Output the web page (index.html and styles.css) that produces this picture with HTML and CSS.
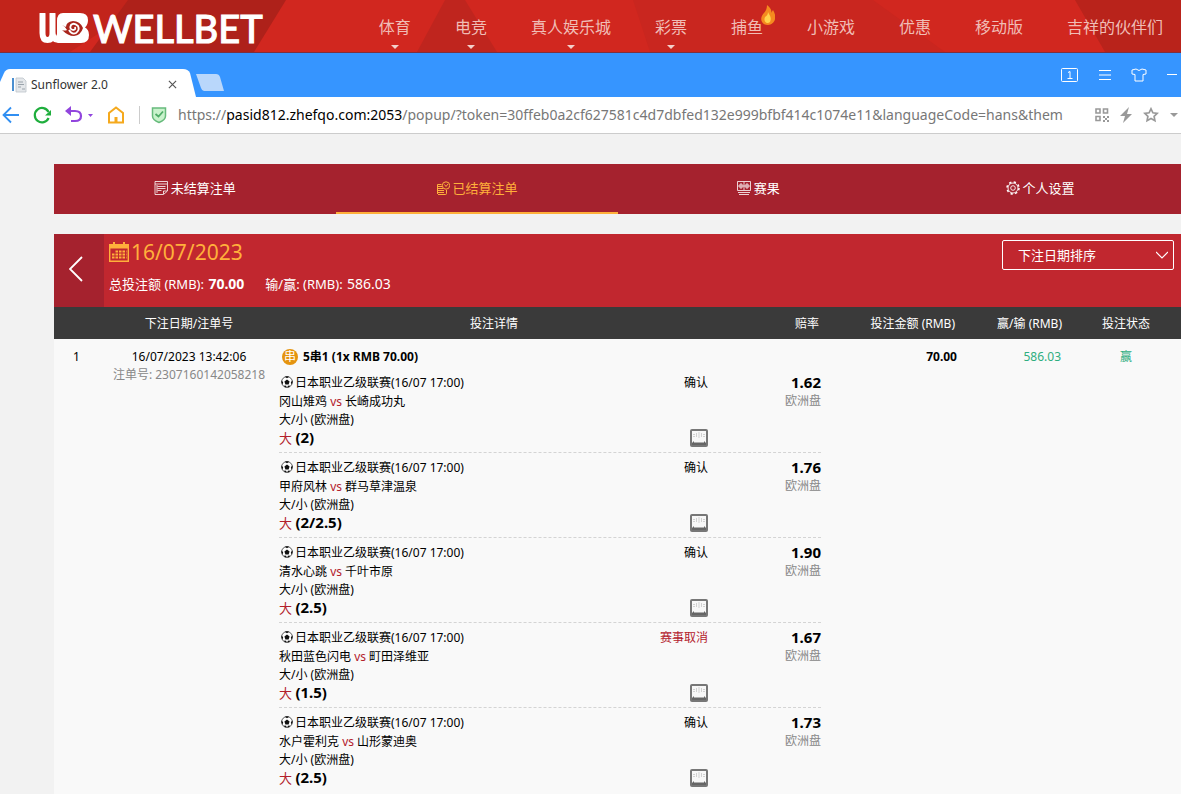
FILE: index.html
```html
<!DOCTYPE html>
<html lang="zh-Hans">
<head>
    <meta charset="UTF-8">
    <meta name="viewport" content="width=device-width, initial-scale=1.0">
    <title>Sunflower 2.0</title>
    <link rel="stylesheet" href="styles.css">
</head>
<body>
    <svg class="sprite" aria-hidden="true">
        <symbol id="ball" viewBox="0 0 12 12">
            <circle cx="6" cy="6" r="5.4" fill="#fff" stroke="#333" stroke-width=".8"/>
            <path d="M6 3.500l2.600 1.900-1 3H4.400l-1-3zM3.800.8L6 2.300 8.200.8 6 .3zM.6 4.500l1.600 1.800-.8 2.400L.4 6zM11.400 4.500L9.800 6.300l.8 2.400 1-2.700zM3.200 9.600l2 .2.3 1.800-2-.6zM8.800 9.600l-2 .2-.3 1.800 2-.6z" fill="#111"/>
        </symbol>
        <symbol id="score" viewBox="0 0 18 18">
            <rect width="18" height="18" rx="2" fill="#777"/>
            <path d="M2 2h14v12H2z" fill="#f7f7f7"/>
            <path d="M2 16v-2l2-2v1.500h10V12l2 2v2z" fill="#666"/>
            <path d="M4 5v4M6.500 4.500v4M11.500 4.500v4M14 5v4M9 3.500v6" fill="none" stroke="#aaa" stroke-dasharray="1 1"/>
        </symbol>
    </svg>

    <header class="site-header">
        <svg class="header-bg" viewBox="0 0 1181 52" preserveAspectRatio="none" aria-hidden="true">
            <path d="M0 0h150L70 52H0z" fill="#c2241b"/>
            <path d="M128 0h158l-32 52H90z" fill="#ae211a"/>
            <path d="M445 0h20l32 52h-80z" fill="#bf251e"/>
            <path d="M633 0h240l72 52H650z" fill="#c9261f"/>
            <path d="M1075 0h106v52h-76z" fill="#b9231b"/>
        </svg>
        <a class="logo" href="#">
            <svg class="logo-mark" viewBox="0 0 50 30" aria-hidden="true">
                <path d="M3.500 1v19q0 7 5 7t5-7V1M13.500 19q0 8 6 8h2" fill="none" stroke="#fff" stroke-width="6" stroke-linecap="round"/>
                <path d="M24 0h17q8 0 8 7 0 5-3 7.500 4 2 4 7.500 0 8-8 8H19q-4-4-1-9V8q0-8 6-8z" fill="#fff"/>
                <path d="M23 12q3 1 5 5-2 1-5 0 6 6 12 6 7-1 9-8-3-7-10-7-7 1-7 6" fill="#a9251c"/>
                <path d="M30 17q3 5 7 3 4-3 2-7-4-4-7-1-2 4 2 5 3 0 2-3" fill="none" stroke="#fff" stroke-width="1.800"/>
            </svg>
            <span>WELLBET</span>
        </a>
        <nav class="site-nav">
            <a class="has-menu" href="#">体育</a>
            <a class="has-menu" href="#">电竞</a>
            <a class="has-menu" href="#">真人娱乐城</a>
            <a class="has-menu" href="#">彩票</a>
            <a href="#">捕鱼<svg class="flame" viewBox="0 0 14 20" aria-hidden="true"><path d="M6 0c4 3 5 6 4 8l2-3c5 8 1 15-5 15-7 0-9-7-4-12 2-2 3-5 3-8z" fill="#f58a1f"/><path d="M7 7c2 4 4 6 2 10-3 3-7-1-5-5 2-1 3-3 3-5z" fill="#ffd34d"/></svg></a>
            <a href="#">小游戏</a>
            <a href="#">优惠</a>
            <a href="#">移动版</a>
            <a href="#">吉祥的伙伴们</a>
        </nav>
    </header>

    <div class="tab-strip">
        <div class="browser-tab">
            <svg class="tab-shape" viewBox="0 0 205 28" preserveAspectRatio="none" aria-hidden="true"><path d="M0 28V13L4 4q2-4 6-4h173q5 0 7 4l6 24z" fill="#fff"/></svg>
            <svg class="favicon" viewBox="0 0 16 16" aria-hidden="true"><path d="M1 1h2v13H1z" fill="#4b8fd0"/><path d="M5 1h7l3 3v11H5z" fill="#e4e7ea" stroke="#bcc4ca" stroke-width=".8"/><path d="M7 5h5M7 7.500h6M7 10h3M11 12h3" stroke="#9aa3ab"/></svg>
            <span>Sunflower 2.0</span>
            <button class="tab-close" aria-label="关闭"><svg viewBox="0 0 10 10" width="9" height="9"><path d="M1 1l8 8M9 1L1 9" stroke="#555" stroke-width="1.300"/></svg></button>
        </div>
        <button class="new-tab" aria-label="新标签页"><svg viewBox="0 0 28 18" width="28" height="18"><path d="M0 0h20q3 0 4 3l4 14H8q-2 0-3-3z" fill="#b9d7fb"/></svg></button>
        <div class="window-tools">
            <button aria-label="1"><svg viewBox="0 0 18 16" width="18" height="16" fill="none" stroke="#fff"><rect x=".5" y="1.500" width="16" height="13" rx="1"/><path d="M7 5.500l2-1v7M6.500 11.500h5"/></svg></button>
            <button aria-label="菜单"><svg viewBox="0 0 14 12" width="14" height="12" stroke="#fff"><path d="M1 1.500h12M1 6h12M1 10.500h12"/></svg></button>
            <button aria-label="皮肤"><svg viewBox="0 0 16 14" width="16" height="14" fill="none" stroke="#fff"><path d="M5 1L1 2v4l3 .5V13h8V6.500l3-.5V2l-4-1q-3 3-6 0z"/></svg></button>
            <button aria-label="最小化"><svg viewBox="0 0 12 12" width="12" height="12" stroke="#fff"><path d="M1 5.500h10"/></svg></button>
        </div>
    </div>

    <div class="toolbar">
        <div class="tools-left">
            <button aria-label="后退"><svg viewBox="0 0 18 18" width="18" height="18" fill="none" stroke="#318ff2" stroke-width="1.800"><path d="M17 9H2M9 1.500L1.500 9 9 16.500"/></svg></button>
            <button aria-label="刷新"><svg viewBox="0 0 18 18" width="18" height="18"><path d="M15.500 6A7.200 7.200 0 1 0 15.600 12" fill="none" stroke="#1fae3d" stroke-width="2.200"/><path d="M18 4v5.500h-6z" fill="#1fae3d"/></svg></button>
            <button aria-label="撤销"><svg viewBox="0 0 30 18" width="30" height="18"><path d="M5 5h6q6 0 6 5t-6 5H7" fill="none" stroke="#9145dd" stroke-width="2.200"/><path d="M7 0v10L1 5z" fill="#9145dd"/><path d="M24 8h5l-2.500 3z" fill="#9145dd"/></svg></button>
            <button aria-label="主页"><svg viewBox="0 0 18 18" width="18" height="18" fill="none" stroke="#f5a91d" stroke-width="2"><path d="M2 7l7-5.500L16 7v9.500H2z"/><path d="M9 16v-5" stroke-width="3"/></svg></button>
        </div>
        <svg class="shield" viewBox="0 0 16 18" aria-hidden="true"><path d="M1.500 2h13v8q0 4-6.500 6.500Q1.500 14 1.500 10z" fill="#c9f2cc" stroke="#67bb7c" stroke-width="1.500"/><path d="M4.500 8l3 2.500 4.500-5" fill="none" stroke="#4fad67" stroke-width="1.800"/></svg>
        <div class="url" role="textbox" aria-label="地址">https://<b>pasid812.zhefqo.com:2053</b>/popup/?token=30ffeb0a2cf627581c4d7dbfed132e999bfbf414c1074e11&amp;languageCode=hans&amp;them</div>
        <div class="tools-right">
            <button aria-label="二维码"><svg viewBox="0 0 14 14" width="14" height="14"><path d="M1 1h4v4H1zM8.500 1h4v4h-4zM1 8.500h4v4H1z" fill="none" stroke="#999" stroke-width="1.600"/><path d="M8 8h2v2H8zM12 8h2v2h-2zM10 10h2v2h-2zM8 12h2v2H8zM12 12h2v2h-2z" fill="#999"/></svg></button>
            <button aria-label="加速"><svg viewBox="0 0 12 16" width="12" height="16"><path d="M9 0L0 9h5l-2 7 9-9H7z" fill="#999"/></svg></button>
            <button aria-label="收藏"><svg viewBox="0 0 16 16" width="16" height="16"><path d="M8 1.800l1.900 4 4.400.5-3.200 3 .8 4.400L8 11.500l-3.900 2.200.8-4.400-3.200-3 4.400-.5z" fill="none" stroke="#999" stroke-width="1.700"/></svg></button>
            <button aria-label="更多"><svg viewBox="0 0 8 4" width="8" height="4"><path d="M0 0h8L4 4z" fill="#999"/></svg></button>
        </div>
    </div>

    <main class="page">
        <nav class="tabs">
            <a href="#"><svg viewBox="0 0 14 14" fill="none" stroke="currentColor" stroke-width=".8"><path d="M9.500 13.500H1V.5h12.500v9.500zM9.500 13V10h3.500M1 3h12M3.500 5.500h8M3.500 7.500h8M3.500 9.500h4M3 4v8"/></svg>未结算注单</a>
            <a class="active" href="#"><svg viewBox="0 0 14 14" fill="none" stroke="currentColor"><circle cx="10" cy="4.500" r="3.700"/><path d="M8.500 3.500L10 5.500 12 3M5.500 3.500H1.500v2M1 5.500h5M1 7.500h6M1 9.500h7M1 11.500h7M2 13.500h7.500q1 0 1-1V9M1.500 5v8"/></svg>已结算注单</a>
            <a href="#"><svg viewBox="0 0 14 14" fill="none" stroke="currentColor" stroke-width=".8"><path d="M.5.5h13v9H.5zM7 1v8M3 3h2v4H3zM9 3h2v4H9zM1 5h12M1 11.500h12M2 13.500h10"/></svg>赛果</a>
            <a href="#"><svg viewBox="0 0 14 14" fill="none" stroke="currentColor" stroke-width=".9"><circle cx="7" cy="7" r="2.300"/><circle cx="7" cy="7" r="5"/><circle cx="7" cy="7" r="6" stroke-width="1.500" stroke-dasharray="2.300 2.410"/></svg>个人设置</a>
        </nav>

        <section class="summary">
            <button class="back" aria-label="返回"><svg viewBox="0 0 14 26" width="14" height="26"><path d="M13 1L1 13l12 12" fill="none" stroke="#fff" stroke-width="1.800"/></svg></button>
            <div class="summary-info">
                <div class="date"><svg viewBox="0 0 20 20" aria-hidden="true"><path d="M.7 3h18.600v16.300H.7z" fill="none" stroke="#ffb03b" stroke-width="1.400"/><path d="M0 2h20v4.500H0zM4 0h2v4H4zM14 0h2v4h-2z" fill="#ffb03b"/><path d="M6.500 9.500h11M3 12.500h14.500M3 15.500h14.500" stroke="#ffb03b" stroke-width="2" stroke-dasharray="2.500 1"/></svg><span>16/07/2023</span></div>
                <div class="totals"><span>总投注额 (RMB): <b class="amount">70.00</b></span><span>输/赢: (RMB): <span class="amount">586.03</span></span></div>
            </div>
            <div class="sort">
                <select aria-label="排序">
                    <option>下注日期排序</option>
                </select>
                <svg viewBox="0 0 12 8" aria-hidden="true"><path d="M0 1l6 6 6-6" fill="none" stroke="#fff" stroke-width="1.200"/></svg>
            </div>
        </section>

        <table class="bets">
            <colgroup>
                <col class="col-no"><col class="col-date"><col class="col-detail"><col class="col-odds"><col class="col-stake"><col class="col-win"><col class="col-status"><col>
            </colgroup>
            <thead>
                <tr><th></th><th>下注日期/注单号</th><th>投注详情</th><th class="right">赔率</th><th class="right">投注金额 (RMB)</th><th class="right">赢/输 (RMB)</th><th>投注状态</th><th></th></tr>
            </thead>
            <tbody>
                <tr>
                    <td class="center">1</td>
                    <td class="center">16/07/2023 13:42:06<div class="bet-id">注单号: 2307160142058218</div></td>
                    <td colspan="2">
                        <div class="parlay"><span class="coin">串</span><b>5串1 (1x RMB 70.00)</b></div>
                        <div class="leg">
                            <div class="match">
                                <div class="league"><svg class="ball"><use href="#ball"/></svg>日本职业乙级联赛(16/07 17:00)</div>
                                <div class="teams">冈山雉鸡 <i>vs</i> 长崎成功丸</div>
                                <div class="market">大/小 (欧洲盘)</div>
                                <div class="pick"><em>大</em> <b>(2)</b></div>
                            </div>
                            <div class="state"><span>确认</span><svg class="score"><use href="#score"/></svg></div>
                            <div class="odds"><b>1.62</b><span>欧洲盘</span></div>
                        </div>
                        <div class="leg">
                            <div class="match">
                                <div class="league"><svg class="ball"><use href="#ball"/></svg>日本职业乙级联赛(16/07 17:00)</div>
                                <div class="teams">甲府风林 <i>vs</i> 群马草津温泉</div>
                                <div class="market">大/小 (欧洲盘)</div>
                                <div class="pick"><em>大</em> <b>(2/2.5)</b></div>
                            </div>
                            <div class="state"><span>确认</span><svg class="score"><use href="#score"/></svg></div>
                            <div class="odds"><b>1.76</b><span>欧洲盘</span></div>
                        </div>
                        <div class="leg">
                            <div class="match">
                                <div class="league"><svg class="ball"><use href="#ball"/></svg>日本职业乙级联赛(16/07 17:00)</div>
                                <div class="teams">清水心跳 <i>vs</i> 千叶市原</div>
                                <div class="market">大/小 (欧洲盘)</div>
                                <div class="pick"><em>大</em> <b>(2.5)</b></div>
                            </div>
                            <div class="state"><span>确认</span><svg class="score"><use href="#score"/></svg></div>
                            <div class="odds"><b>1.90</b><span>欧洲盘</span></div>
                        </div>
                        <div class="leg">
                            <div class="match">
                                <div class="league"><svg class="ball"><use href="#ball"/></svg>日本职业乙级联赛(16/07 17:00)</div>
                                <div class="teams">秋田蓝色闪电 <i>vs</i> 町田泽维亚</div>
                                <div class="market">大/小 (欧洲盘)</div>
                                <div class="pick"><em>大</em> <b>(1.5)</b></div>
                            </div>
                            <div class="state"><span class="cancelled">赛事取消</span><svg class="score"><use href="#score"/></svg></div>
                            <div class="odds"><b>1.67</b><span>欧洲盘</span></div>
                        </div>
                        <div class="leg">
                            <div class="match">
                                <div class="league"><svg class="ball"><use href="#ball"/></svg>日本职业乙级联赛(16/07 17:00)</div>
                                <div class="teams">水户霍利克 <i>vs</i> 山形蒙迪奥</div>
                                <div class="market">大/小 (欧洲盘)</div>
                                <div class="pick"><em>大</em> <b>(2.5)</b></div>
                            </div>
                            <div class="state"><span>确认</span><svg class="score"><use href="#score"/></svg></div>
                            <div class="odds"><b>1.73</b><span>欧洲盘</span></div>
                        </div>
                    </td>
                    <td class="right"><b>70.00</b></td>
                    <td class="right win">586.03</td>
                    <td class="center win">赢</td>
                    <td></td>
                </tr>
            </tbody>
        </table>
    </main>
</body>
</html>
```

FILE: styles.css
```css
* {
    box-sizing: border-box;
}
body {
    margin: 0;
    background: #f2f2f2;
    color: #000;
    font: 12px/18px "Noto Sans", "Noto Sans CJK SC", sans-serif;
    overflow: hidden;
}
a {
    color: inherit;
    text-decoration: none;
}
button {
    display: flex;
    align-items: center;
    justify-content: center;
    padding: 0;
    border: 0;
    background: none;
    cursor: pointer;
}
svg {
    flex: none;
}
.sprite {
    position: absolute;
    width: 0;
    height: 0;
}

/* site header */
.site-header {
    position: relative;
    display: flex;
    align-items: center;
    justify-content: space-between;
    height: 53px;
    padding: 2px 18px 0 39px;
    background: #d1271f;
    border-bottom: 1px solid #7d3040;
}
.header-bg {
    position: absolute;
    inset: 0;
    width: 100%;
    height: 100%;
}
.logo {
    position: relative;
    display: flex;
    align-items: center;
    gap: 4px;
    margin-top: 2px;
    color: #fff;
    font: 500 38px/48px Lato, sans-serif;
    -webkit-text-stroke: 1px #fff;
}
.logo-mark {
    width: 50px;
    height: 30px;
}
.site-nav {
    position: relative;
    display: flex;
    gap: 44px;
    color: #f0bdb6;
    font-size: 16px;
    line-height: 24px;
    white-space: nowrap;
}
.site-nav a {
    position: relative;
}
.has-menu::after {
    content: "";
    position: absolute;
    top: 30px;
    left: 50%;
    margin-left: -4px;
    border: 4px solid transparent;
    border-top-color: #f3d0cb;
    border-bottom: 0;
}
.flame {
    position: absolute;
    top: -10px;
    right: -12px;
    width: 14px;
    height: 20px;
}

/* browser chrome */
.tab-strip {
    display: flex;
    align-items: flex-end;
    height: 44px;
    background: #3695ff;
}
.browser-tab {
    position: relative;
    display: flex;
    align-items: center;
    gap: 4px;
    width: 196px;
    height: 28px;
    padding: 3px 19px 0 11px;
    color: #333;
}
.browser-tab > * {
    position: relative;
}
.browser-tab .tab-shape {
    position: absolute;
    top: 0;
    left: 0;
    width: 205px;
    height: 28px;
}
.favicon {
    width: 16px;
    height: 16px;
}
.tab-close {
    margin-left: auto;
}
.new-tab {
    margin-bottom: 5px;
}
.window-tools {
    display: flex;
    align-items: center;
    gap: 19px;
    height: 44px;
    margin-left: auto;
    padding-right: 3px;
}
.toolbar {
    display: flex;
    align-items: center;
    height: 37px;
    padding: 0 2px;
    background: #fff;
    border-bottom: 1px solid #ccc;
}
.tools-left {
    display: flex;
    align-items: center;
    gap: 13px;
    padding-right: 14px;
    border-right: 1px solid #ccc;
}
.shield {
    width: 16px;
    height: 18px;
    margin: 0 11px;
}
.url {
    flex: 1;
    min-width: 0;
    overflow: hidden;
    white-space: nowrap;
    color: #777;
    font-size: 14px;
    line-height: 24px;
}
.url b {
    color: #000;
    font-weight: 400;
}
.tools-right {
    display: flex;
    align-items: center;
    gap: 11px;
    padding: 0 1px 0 6px;
}

/* statement page */
.page {
    margin: 30px 0 0 54px;
}
.tabs {
    display: flex;
    height: 50px;
    margin-bottom: 20px;
    background: #a5222e;
    color: #fff;
    font-size: 13px;
}
.tabs a {
    flex: 1;
    display: flex;
    align-items: center;
    justify-content: center;
    gap: 3px;
    border-bottom: 2px solid transparent;
}
.tabs svg {
    width: 14px;
    height: 14px;
}
.tabs .active {
    color: #ffb03b;
    border-bottom-color: #ffb03b;
}
.summary {
    display: flex;
    align-items: flex-start;
    height: 73px;
    background: #c1272f;
    color: #fff;
}
.back {
    align-self: stretch;
    width: 50px;
    padding: 0 6px 4px 0;
    background: #a5222e;
}
.summary-info {
    padding: 4px 5px;
}
.date {
    display: flex;
    align-items: center;
    gap: 2px;
    color: #ffb03b;
    font-size: 21px;
    line-height: 28px;
}
.date svg {
    width: 20px;
    height: 20px;
}
.totals {
    display: flex;
    gap: 21px;
    padding-top: 9px;
    font-size: 13px;
}
.amount {
    margin-left: 1px;
    font-size: 14px;
}
.sort {
    position: relative;
    width: 172px;
    margin: 6px 7px 0 auto;
}
.sort select {
    appearance: none;
    width: 100%;
    height: 30px;
    padding: 0 15px;
    background: transparent;
    border: 1px solid #fff;
    border-radius: 2px;
    color: #fff;
    font: inherit;
    font-size: 13px;
}
.sort option {
    color: #000;
}
.sort svg {
    position: absolute;
    top: 11px;
    right: 6px;
    width: 12px;
    height: 8px;
    pointer-events: none;
}

/* bets table */
.bets {
    width: 100%;
    table-layout: fixed;
    border-collapse: collapse;
    background: #f9f9f9;
}
.bets th {
    height: 32px;
    padding: 2px 0 0;
    background: #3a3a3a;
    color: #fff;
    font-weight: 400;
    white-space: nowrap;
}
.bets td {
    padding: 9px 0;
    vertical-align: top;
    white-space: nowrap;
}
.bets th.right {
    padding-right: 2px;
}
.bets td.win.right {
    padding-right: 3px;
}
.col-no { width: 45px; }
.col-date { width: 180px; }
.col-detail { width: 430px; }
.col-odds { width: 112px; }
.col-stake { width: 136px; }
.col-win { width: 107px; }
.col-status { width: 124px; }
.center {
    text-align: center;
}
.bets .right {
    text-align: right;
}
.bet-id {
    color: #888;
}
.win {
    color: #2fae80;
}
.parlay {
    display: flex;
    align-items: center;
    gap: 5px;
    height: 20px;
    padding: 0 0 2px 3px;
}
.coin {
    width: 16px;
    height: 16px;
    border-radius: 50%;
    background: #e5940f;
    color: #fff;
    line-height: 16px;
    text-align: center;
}
.leg {
    display: grid;
    grid-template-columns: 1fr auto 113px;
    padding: 5px 0;
    border-bottom: 1px dashed #d4d4d4;
}
.leg:last-child {
    border-bottom: 0;
}
.league,
.teams {
    line-height: 19px;
}
.league {
    display: flex;
    align-items: center;
    gap: 2px;
}
.ball {
    width: 12px;
    height: 12px;
    margin: 0 0 2px 2px;
}
.teams i,
.pick em {
    color: #b3202c;
    font-style: normal;
}
.pick {
    height: 18px;
    font-size: 13px;
    line-height: 16px;
}
.pick b {
    font-size: 15px;
}
.state {
    display: flex;
    flex-direction: column;
    align-items: flex-end;
    justify-content: space-between;
    line-height: 19px;
}
.state .cancelled {
    color: #b3202c;
}
.score {
    width: 18px;
    height: 18px;
}
.odds {
    display: flex;
    flex-direction: column;
    align-items: flex-end;
    line-height: 19px;
}
.odds b {
    font-size: 15px;
    line-height: 18px;
}
.odds span {
    color: #888;
}
```
